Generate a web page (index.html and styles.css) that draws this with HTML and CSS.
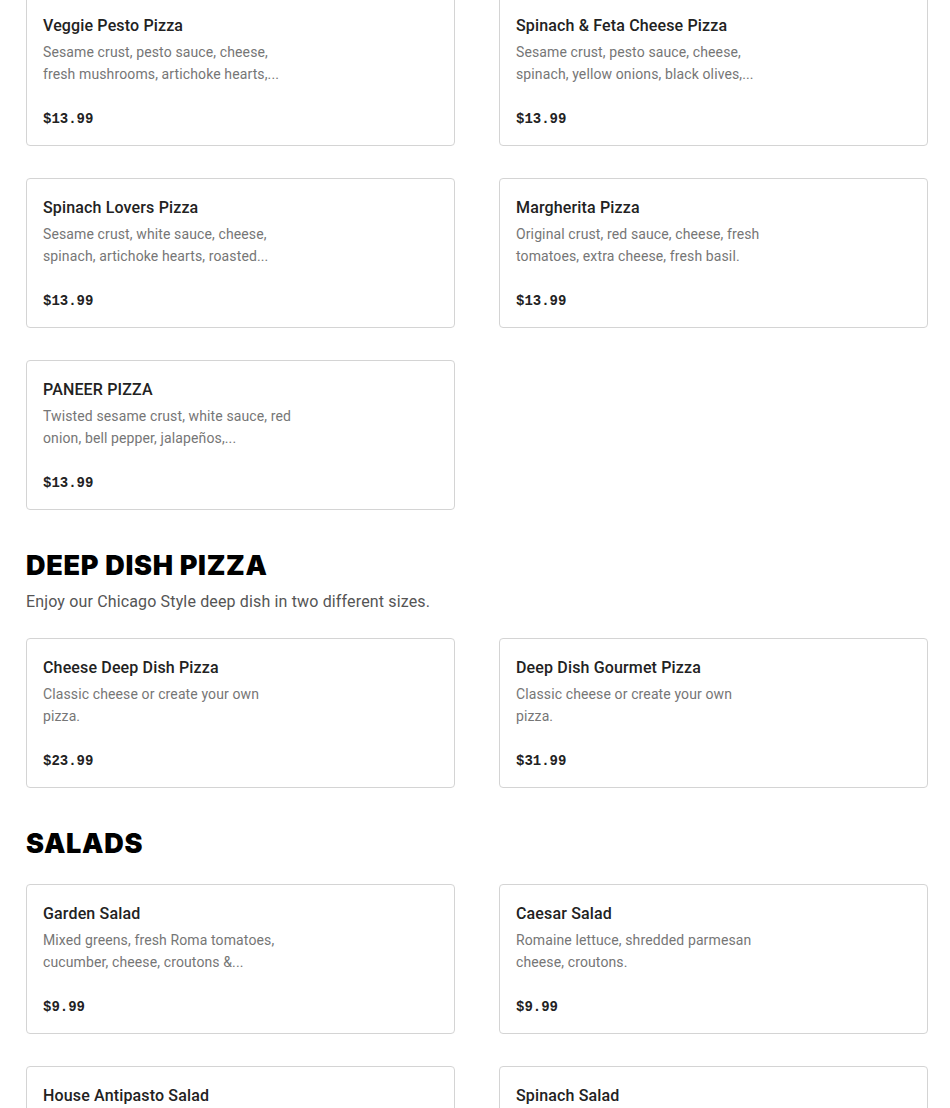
FILE: index.html
```html
<!DOCTYPE html>
<html>
<head>
<meta charset="utf-8">
<link rel="stylesheet" href="styles.css">
</head>
<body>
<main class="menu">
  <section class="section first">
    <div class="grid">
      <div class="card">
        <div class="title">Veggie Pesto Pizza</div>
        <div class="desc"><span>Sesame crust, pesto sauce, cheese,</span><span>fresh mushrooms, artichoke hearts,...</span></div>
        <div class="price">$13.99</div>
      </div>
      <div class="card">
        <div class="title">Spinach &amp; Feta Cheese Pizza</div>
        <div class="desc"><span>Sesame crust, pesto sauce, cheese,</span><span>spinach, yellow onions, black olives,...</span></div>
        <div class="price">$13.99</div>
      </div>
      <div class="card">
        <div class="title">Spinach Lovers Pizza</div>
        <div class="desc"><span>Sesame crust, white sauce, cheese,</span><span>spinach, artichoke hearts, roasted...</span></div>
        <div class="price">$13.99</div>
      </div>
      <div class="card">
        <div class="title">Margherita Pizza</div>
        <div class="desc"><span>Original crust, red sauce, cheese, fresh</span><span>tomatoes, extra cheese, fresh basil.</span></div>
        <div class="price">$13.99</div>
      </div>
      <div class="card">
        <div class="title">PANEER PIZZA</div>
        <div class="desc"><span>Twisted sesame crust, white sauce, red</span><span>onion, bell pepper, jalapeños,...</span></div>
        <div class="price">$13.99</div>
      </div>
    </div>
  </section>

  <section class="section">
    <h2 class="heading">DEEP DISH PIZZA</h2>
    <p class="intro">Enjoy our Chicago Style deep dish in two different sizes.</p>
    <div class="grid">
      <div class="card">
        <div class="title">Cheese Deep Dish Pizza</div>
        <div class="desc"><span>Classic cheese or create your own</span><span>pizza.</span></div>
        <div class="price">$23.99</div>
      </div>
      <div class="card">
        <div class="title">Deep Dish Gourmet Pizza</div>
        <div class="desc"><span>Classic cheese or create your own</span><span>pizza.</span></div>
        <div class="price">$31.99</div>
      </div>
    </div>
  </section>

  <section class="section">
    <h2 class="heading">SALADS</h2>
    <div class="grid">
      <div class="card">
        <div class="title">Garden Salad</div>
        <div class="desc"><span>Mixed greens, fresh Roma tomatoes,</span><span>cucumber, cheese, croutons &amp;...</span></div>
        <div class="price">$9.99</div>
      </div>
      <div class="card">
        <div class="title">Caesar Salad</div>
        <div class="desc"><span>Romaine lettuce, shredded parmesan</span><span>cheese, croutons.</span></div>
        <div class="price">$9.99</div>
      </div>
      <div class="card">
        <div class="title">House Antipasto Salad</div>
        <div class="desc"><span>Mixed greens, salami, pepperoni,</span><span>cheese, olives...</span></div>
        <div class="price">$9.99</div>
      </div>
      <div class="card">
        <div class="title">Spinach Salad</div>
        <div class="desc"><span>Fresh spinach, mushrooms, red onions,</span><span>cheese...</span></div>
        <div class="price">$9.99</div>
      </div>
    </div>
  </section>
</main>
</body>
</html>
```

FILE: styles.css
```css
html, body {
  margin: 0;
  padding: 0;
  background: #ffffff;
}

body {
  font-family: Roboto, "Noto Sans", "Liberation Sans", sans-serif;
  color: #222222;
}

.menu {
  width: 902px;
  margin-left: 26px;
  margin-top: -4px;
}

.section {
  margin-top: 40px;
}

.section.first {
  margin-top: 0;
}

.heading {
  margin: 0;
  font-family: Inter, "Liberation Sans", sans-serif;
  font-weight: 900;
  font-size: 27px;
  line-height: 32px;
  letter-spacing: 0.7px;
  color: #000000;
}

.intro {
  margin: 8px 0 0 0;
  font-size: 16px;
  line-height: 24px;
  letter-spacing: 0.15px;
  color: #555555;
}

.grid {
  margin-top: 24px;
  display: grid;
  grid-template-columns: 1fr 1fr;
  column-gap: 44px;
  row-gap: 32px;
}

.section.first .grid {
  margin-top: 0;
}

.card {
  height: 150px;
  box-sizing: border-box;
  border: 1px solid #d4d4d4;
  border-radius: 4px;
  padding: 17px 16px 0 16px;
  display: flex;
  flex-direction: column;
}

.title {
  font-size: 16px;
  font-weight: 500;
  line-height: 24px;
  letter-spacing: 0.15px;
  color: #222222;
}

.desc {
  margin-top: 3px;
  font-size: 14px;
  line-height: 22px;
  letter-spacing: 0.12px;
  color: #767676;
  display: flex;
  flex-direction: column;
  white-space: nowrap;
}

.price {
  margin-top: 24px;
  font-family: "Liberation Mono", "DejaVu Sans Mono", monospace;
  font-weight: 700;
  font-size: 14px;
  line-height: 20px;
  color: #222222;
}
```
